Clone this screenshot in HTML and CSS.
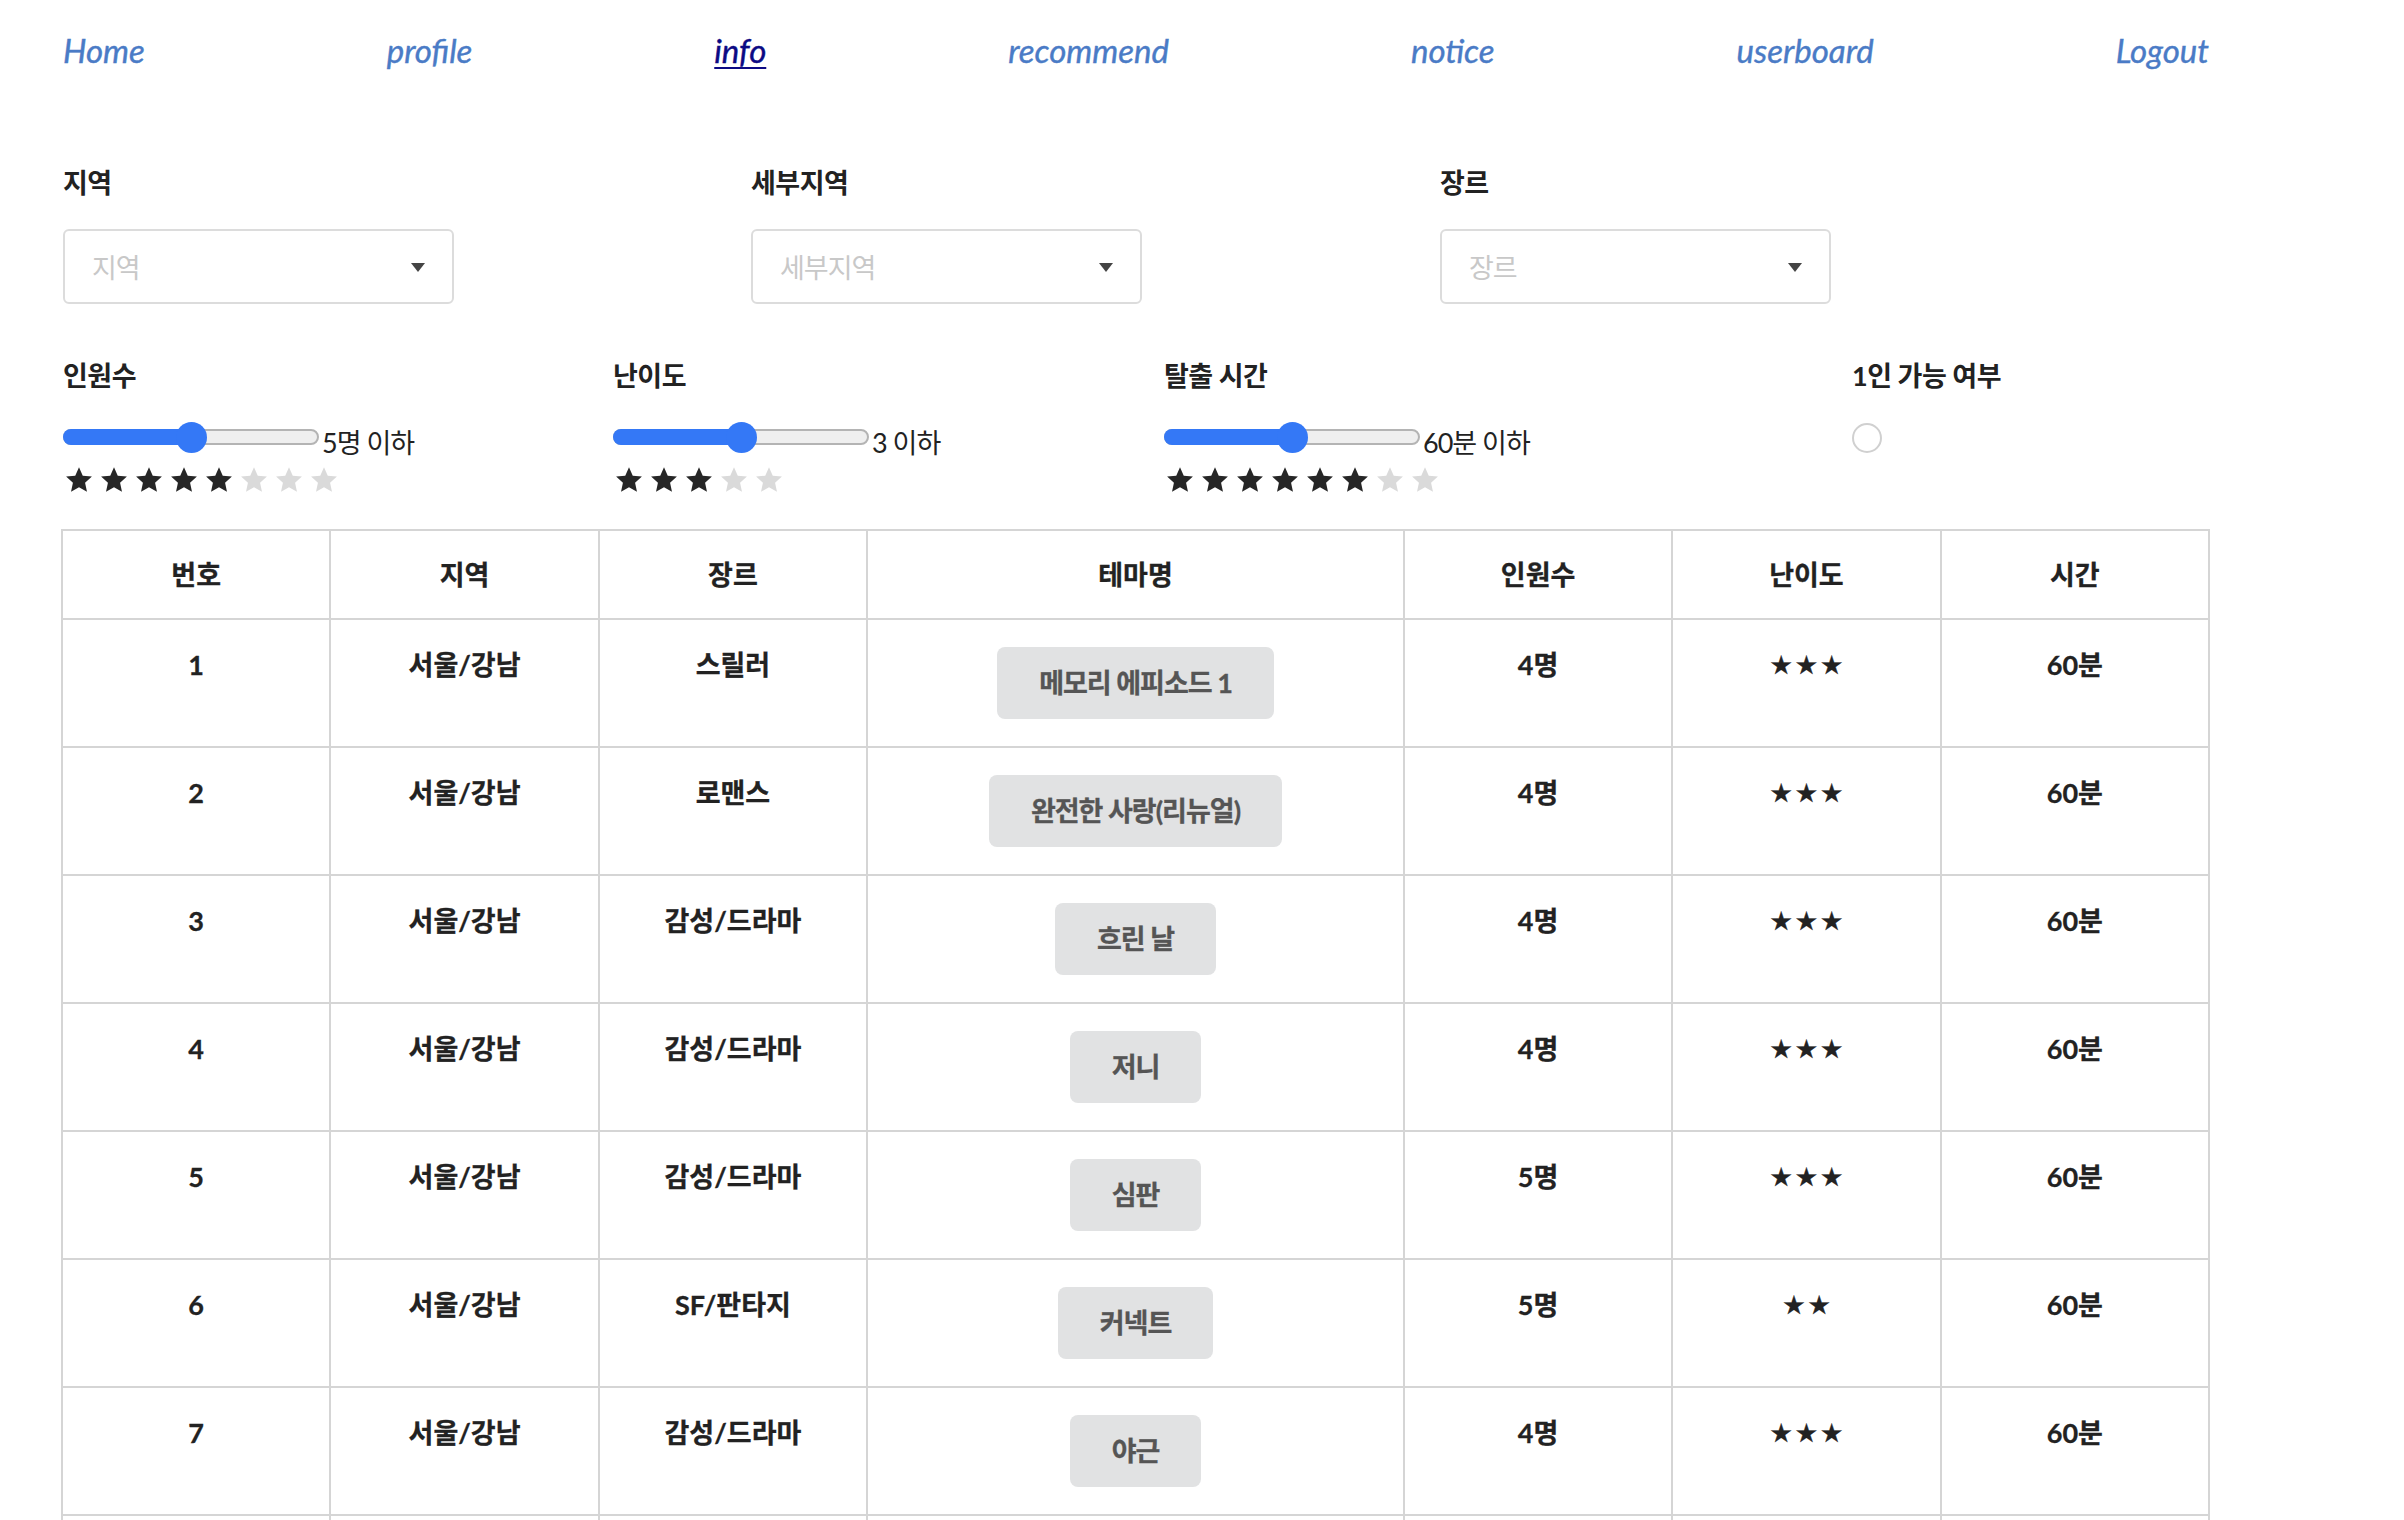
FILE: index.html
```html
<!DOCTYPE html>
<html lang="ko">
<head>
<meta charset="utf-8">
<title>info</title>
<link rel="stylesheet" href="styles.css">
</head>
<body>
<svg class="defs" width="0" height="0" aria-hidden="true">
  <defs>
    <symbol id="star" viewBox="-0.2 0 25.4 24">
      <polygon points="12.5,0 16.17,8.22 25.12,9.17 18.43,15.2 20.3,24 12.5,19.51 4.7,24 6.57,15.2 -0.12,9.17 8.83,8.22"/>
    </symbol>
  </defs>
</svg>
<div class="page">
  <nav class="nav">
    <a class="nav-link" href="#">Home</a>
    <a class="nav-link" href="#">profile</a>
    <a class="nav-link nav-link--current" href="#">info</a>
    <a class="nav-link" href="#">recommend</a>
    <a class="nav-link" href="#">notice</a>
    <a class="nav-link" href="#">userboard</a>
    <a class="nav-link" href="#">Logout</a>
  </nav>

  <section class="filters">
    <div class="select-row">
      <div class="field">
        <div class="field-label">지역</div>
        <div class="select"><span class="placeholder">지역</span><span class="caret"></span></div>
      </div>
      <div class="field">
        <div class="field-label">세부지역</div>
        <div class="select"><span class="placeholder">세부지역</span><span class="caret"></span></div>
      </div>
      <div class="field">
        <div class="field-label">장르</div>
        <div class="select"><span class="placeholder">장르</span><span class="caret"></span></div>
      </div>
    </div>

    <div class="range-row">
      <div class="field">
        <div class="field-label">인원수</div>
        <div class="range-line">
          <div class="range"><div class="range-fill" style="width:50%"></div><div class="range-thumb" style="left:50%"></div></div>
          <span class="range-value">5명 이하</span>
        </div>
        <div class="rating">
          <svg class="star on"><use href="#star"/></svg><svg class="star on"><use href="#star"/></svg><svg class="star on"><use href="#star"/></svg><svg class="star on"><use href="#star"/></svg><svg class="star on"><use href="#star"/></svg><svg class="star off"><use href="#star"/></svg><svg class="star off"><use href="#star"/></svg><svg class="star off"><use href="#star"/></svg>
        </div>
      </div>
      <div class="field">
        <div class="field-label">난이도</div>
        <div class="range-line">
          <div class="range"><div class="range-fill" style="width:50%"></div><div class="range-thumb" style="left:50%"></div></div>
          <span class="range-value">3 이하</span>
        </div>
        <div class="rating">
          <svg class="star on"><use href="#star"/></svg><svg class="star on"><use href="#star"/></svg><svg class="star on"><use href="#star"/></svg><svg class="star off"><use href="#star"/></svg><svg class="star off"><use href="#star"/></svg>
        </div>
      </div>
      <div class="field">
        <div class="field-label">탈출 시간</div>
        <div class="range-line">
          <div class="range"><div class="range-fill" style="width:50%"></div><div class="range-thumb" style="left:50%"></div></div>
          <span class="range-value">60분 이하</span>
        </div>
        <div class="rating">
          <svg class="star on"><use href="#star"/></svg><svg class="star on"><use href="#star"/></svg><svg class="star on"><use href="#star"/></svg><svg class="star on"><use href="#star"/></svg><svg class="star on"><use href="#star"/></svg><svg class="star on"><use href="#star"/></svg><svg class="star off"><use href="#star"/></svg><svg class="star off"><use href="#star"/></svg>
        </div>
      </div>
      <div class="field">
        <div class="field-label">1인 가능 여부</div>
        <div class="radio"></div>
      </div>
    </div>
  </section>

  <table class="themes">
    <colgroup>
      <col class="c1"><col class="c1"><col class="c1"><col class="c2"><col class="c1"><col class="c1"><col class="c1">
    </colgroup>
    <thead>
      <tr><th>번호</th><th>지역</th><th>장르</th><th>테마명</th><th>인원수</th><th>난이도</th><th>시간</th></tr>
    </thead>
    <tbody>
      <tr><td>1</td><td>서울/강남</td><td>스릴러</td><td class="theme"><span class="theme-btn">메모리 에피소드 1</span></td><td>4명</td><td class="stars">★★★</td><td>60분</td></tr>
      <tr><td>2</td><td>서울/강남</td><td>로맨스</td><td class="theme"><span class="theme-btn">완전한 사랑(리뉴얼)</span></td><td>4명</td><td class="stars">★★★</td><td>60분</td></tr>
      <tr><td>3</td><td>서울/강남</td><td>감성/드라마</td><td class="theme"><span class="theme-btn">흐린 날</span></td><td>4명</td><td class="stars">★★★</td><td>60분</td></tr>
      <tr><td>4</td><td>서울/강남</td><td>감성/드라마</td><td class="theme"><span class="theme-btn">저니</span></td><td>4명</td><td class="stars">★★★</td><td>60분</td></tr>
      <tr><td>5</td><td>서울/강남</td><td>감성/드라마</td><td class="theme"><span class="theme-btn">심판</span></td><td>5명</td><td class="stars">★★★</td><td>60분</td></tr>
      <tr><td>6</td><td>서울/강남</td><td>SF/판타지</td><td class="theme"><span class="theme-btn">커넥트</span></td><td>5명</td><td class="stars">★★</td><td>60분</td></tr>
      <tr><td>7</td><td>서울/강남</td><td>감성/드라마</td><td class="theme"><span class="theme-btn">야근</span></td><td>4명</td><td class="stars">★★★</td><td>60분</td></tr>
      <tr class="row-empty"><td></td><td></td><td></td><td></td><td></td><td></td><td></td></tr>
    </tbody>
  </table>
</div>
</body>
</html>
```

FILE: styles.css
```css
html, body {
  margin: 0;
  padding: 0;
  background: #ffffff;
}

body {
  font-family: "Lato", "Noto Sans CJK KR", sans-serif;
  color: #222222;
}

.defs {
  position: absolute;
  width: 0;
  height: 0;
  overflow: hidden;
}

.page {
  padding-left: 61px;
}

/* ---------- nav ---------- */
.nav {
  display: flex;
  justify-content: space-between;
  width: 2146px;
  margin-left: 2px;
  padding-top: 31px;
  font-size: 33px;
  line-height: 38px;
  font-style: italic;
}

.nav-link {
  color: #4a7bc6;
  text-decoration: none;
  -webkit-text-stroke: 0.4px currentColor;
}

.nav-link--current {
  color: #0c0a84;
  text-decoration: underline;
  text-decoration-thickness: 2px;
  text-underline-offset: 4px;
}

/* ---------- filters ---------- */
.filters {
  padding-left: 2px;
}

.field-label {
  font-size: 27px;
  line-height: 36px;
  font-weight: 700;
  color: #222222;
  letter-spacing: -0.5px;
}

.select-row {
  display: grid;
  grid-template-columns: 688px 689px auto;
  margin-top: 96px;
}

.select {
  box-sizing: border-box;
  width: 391px;
  height: 75px;
  margin-top: 28px;
  border: 2px solid #dcdcdc;
  border-radius: 6px;
  display: flex;
  align-items: center;
  justify-content: space-between;
  padding: 0 27px 0 27px;
}

.placeholder {
  font-size: 27px;
  color: #c8c8c8;
  letter-spacing: -1px;
}

.caret {
  width: 0;
  height: 0;
  border-left: 7px solid transparent;
  border-right: 7px solid transparent;
  border-top: 9px solid #444444;
  margin-top: 2px;
}

.range-row {
  display: grid;
  grid-template-columns: 550px 551px 688px auto;
  margin-top: 54px;
}

.range-line {
  display: flex;
  align-items: flex-start;
  margin-top: 27px;
  height: 32px;
}

.range {
  position: relative;
  box-sizing: border-box;
  width: 256px;
  height: 16px;
  margin-top: 8px;
  border: 2px solid #b4b4b4;
  border-radius: 8px;
  background: #efefef;
}

.range-fill {
  position: absolute;
  left: -2px;
  top: -2px;
  bottom: -2px;
  background: #3478f6;
  border-radius: 8px 0 0 8px;
}

.range-thumb {
  position: absolute;
  top: 50%;
  width: 31px;
  height: 31px;
  margin-left: -15px;
  margin-top: -15.5px;
  border-radius: 50%;
  background: #3478f6;
}

.range-value {
  margin-left: 3px;
  margin-top: 4px;
  font-size: 27px;
  line-height: 36px;
  color: #222222;
  letter-spacing: -1px;
  white-space: nowrap;
}

.rating {
  display: flex;
  gap: 9px;
  margin-top: 14px;
  padding-left: 3px;
}

.star {
  width: 26px;
  height: 25px;
  display: block;
}

.star.on {
  fill: #262626;
}

.star.off {
  fill: #dadada;
}

.radio {
  box-sizing: border-box;
  width: 30px;
  height: 30px;
  margin-top: 29px;
  border: 2px solid #d0d0d0;
  border-radius: 50%;
}

/* ---------- table ---------- */
.themes {
  width: 2149px;
  margin-top: 37px;
  border-collapse: collapse;
  table-layout: fixed;
}

.c1 {
  width: 12.5%;
}

.c2 {
  width: 25%;
}

.themes th,
.themes td {
  border: 2px solid #d5d5d5;
  text-align: center;
  font-size: 27px;
  line-height: 36px;
  font-weight: 700;
  color: #222222;
  letter-spacing: 0;
  -webkit-text-stroke: 0.3px currentColor;
}

.themes th {
  height: 89px;
  padding: 0;
  box-sizing: border-box;
  vertical-align: middle;
}

.themes td {
  height: 128px;
  box-sizing: border-box;
  padding: 27px 8px 0;
  vertical-align: top;
}

.themes td.theme {
  padding: 0 8px;
  vertical-align: middle;
}

.theme-btn {
  display: inline-block;
  height: 72px;
  line-height: 72px;
  padding: 0 42px;
  background: #e1e2e3;
  border-radius: 8px;
  color: #555555;
  font-weight: 700;
  letter-spacing: -1px;
}

.themes td.stars {
  font-family: "DejaVu Sans", sans-serif;
  font-size: 26px;
  letter-spacing: 2px;
  padding-left: 10px;
  padding-top: 27px;
  -webkit-text-stroke: 0.3px currentColor;
}
```
